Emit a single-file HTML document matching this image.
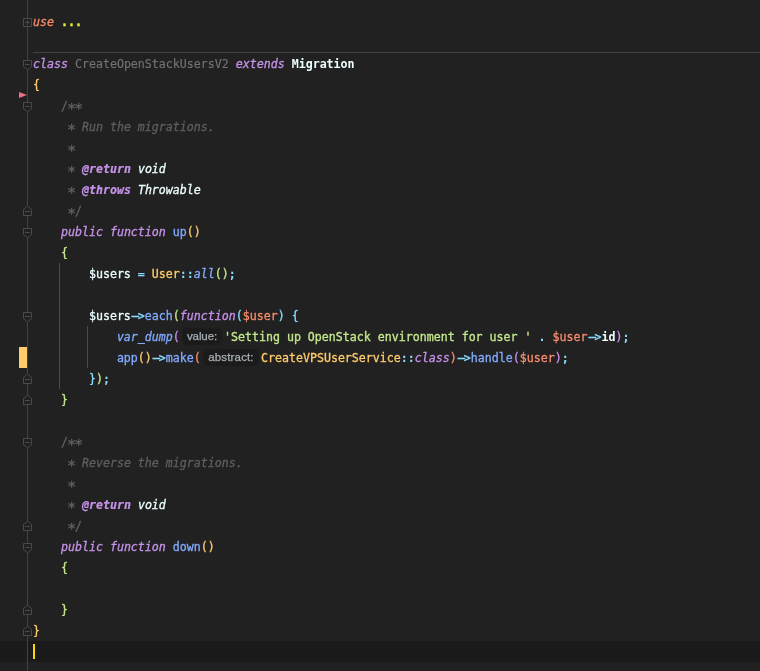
<!DOCTYPE html>
<html>
<head>
<meta charset="utf-8">
<title>CreateOpenStackUsersV2.php</title>
<style>
html,body{margin:0;padding:0;background:#212121;}
body{width:760px;height:671px;position:relative;overflow:hidden;font-family:"DejaVu Sans Mono","Liberation Mono",monospace;font-size:11.627px;color:#eeffff;}
.ln{position:absolute;left:33px;height:21px;line-height:21px;white-space:pre;margin-top:1px;will-change:transform;-webkit-text-stroke:0.3px currentColor;}
.cur{position:absolute;left:0;top:641px;width:760px;height:21px;background:#1a1a1a;}
.caret{position:absolute;left:33px;top:644px;width:2px;height:15px;background:#ffd600;}
.vline{position:absolute;left:27px;top:0;width:1px;height:671px;background:#424242;}
.sep{position:absolute;left:33px;top:52px;width:727px;height:1px;background:#424242;}
.g1{position:absolute;left:59px;top:263px;width:1px;height:126px;background:#475234;}
.g2{position:absolute;left:87px;top:326px;width:1px;height:42px;background:#37515c;}
.mod{position:absolute;left:19px;top:347px;width:8px;height:21px;background:#ffcb6b;}
.fold{position:absolute;left:22px;width:11px;height:12px;}
i{font-style:oblique;}
.k{color:#c792ea;font-style:oblique;}
.u{color:#f78c6c;font-style:oblique;}
.d{color:#ecec3a;font-weight:bold;}
.g{color:#737373;-webkit-text-stroke:0.15px currentColor;}
.w{color:#eeffff;}
.wb{color:#eeffff;font-weight:bold;-webkit-text-stroke:0;}
.y{color:#ffcb6b;}
.gr{color:#c3e88d;}
.c{color:#89ddff;}
.cb{color:#89ddff;font-weight:bold;-webkit-text-stroke:0;}
.b{color:#82aaff;}
.bi{color:#82aaff;font-style:oblique;}
.o{color:#f78c6c;}
.p{color:#c792ea;}
.cm{color:#5e5e5e;font-style:oblique;}
.cs{color:#606060;}
.hy{display:inline-block;font-weight:normal;transform-origin:40% 50%;transform:scaleX(2.4);}
.as{display:inline-block;font-weight:normal;transform:translateY(2.5px) scale(1.25);}
.t{color:#c792ea;font-style:oblique;font-weight:bold;-webkit-text-stroke:0.2px currentColor;}
.wi{color:#eeffff;font-style:oblique;}
.hint{will-change:transform;position:absolute;height:17px;line-height:17px;border-radius:5px;background:#1b1b1b;color:#a6afb4;font-family:"Liberation Sans",sans-serif;font-size:11.5px;-webkit-text-stroke:0.25px currentColor;text-align:center;white-space:pre;}
</style>
</head>
<body>
<div class="cur"></div>
<div class="vline"></div>
<div class="sep"></div>
<div class="g1"></div>
<div class="g2"></div>
<div class="mod"></div>
<svg style="position:absolute;left:18px;top:91px" width="10" height="8" viewBox="0 0 10 8"><path d="M1 1 L9 4 L1 7 Z" fill="#f07080"/></svg>

<svg class="fold" style="top:17px" width="11" height="12" viewBox="0 0 11 12"><path d="M1.5 1.5 H9.5 V9.5 H1.5 Z" fill="#212121" stroke="#4a4a4a"/><path d="M3 5.5 H8 M5.5 3 V8" stroke="#4a4a4a"/></svg>
<svg class="fold" style="top:59px" width="11" height="12" viewBox="0 0 11 12"><path d="M1.5 1.5 H9.5 V7.5 L5.5 11 L1.5 7.5 Z" fill="#212121" stroke="#4a4a4a"/><path d="M3 5.5 H8" stroke="#4a4a4a"/></svg>
<svg class="fold" style="top:101px" width="11" height="12" viewBox="0 0 11 12"><path d="M1.5 1.5 H9.5 V7.5 L5.5 11 L1.5 7.5 Z" fill="#212121" stroke="#4a4a4a"/><path d="M3 5.5 H8" stroke="#4a4a4a"/></svg>
<svg class="fold" style="top:227px" width="11" height="12" viewBox="0 0 11 12"><path d="M1.5 1.5 H9.5 V7.5 L5.5 11 L1.5 7.5 Z" fill="#212121" stroke="#4a4a4a"/><path d="M3 5.5 H8" stroke="#4a4a4a"/></svg>
<svg class="fold" style="top:311px" width="11" height="12" viewBox="0 0 11 12"><path d="M1.5 1.5 H9.5 V7.5 L5.5 11 L1.5 7.5 Z" fill="#212121" stroke="#4a4a4a"/><path d="M3 5.5 H8" stroke="#4a4a4a"/></svg>
<svg class="fold" style="top:437px" width="11" height="12" viewBox="0 0 11 12"><path d="M1.5 1.5 H9.5 V7.5 L5.5 11 L1.5 7.5 Z" fill="#212121" stroke="#4a4a4a"/><path d="M3 5.5 H8" stroke="#4a4a4a"/></svg>
<svg class="fold" style="top:542px" width="11" height="12" viewBox="0 0 11 12"><path d="M1.5 1.5 H9.5 V7.5 L5.5 11 L1.5 7.5 Z" fill="#212121" stroke="#4a4a4a"/><path d="M3 5.5 H8" stroke="#4a4a4a"/></svg>
<svg class="fold" style="top:205px" width="11" height="12" viewBox="0 0 11 12"><path d="M1.5 10.5 H9.5 V4.5 L5.5 1 L1.5 4.5 Z" fill="#212121" stroke="#4a4a4a"/><path d="M3 6.5 H8" stroke="#4a4a4a"/></svg>
<svg class="fold" style="top:373px" width="11" height="12" viewBox="0 0 11 12"><path d="M1.5 10.5 H9.5 V4.5 L5.5 1 L1.5 4.5 Z" fill="#212121" stroke="#4a4a4a"/><path d="M3 6.5 H8" stroke="#4a4a4a"/></svg>
<svg class="fold" style="top:394px" width="11" height="12" viewBox="0 0 11 12"><path d="M1.5 10.5 H9.5 V4.5 L5.5 1 L1.5 4.5 Z" fill="#212121" stroke="#4a4a4a"/><path d="M3 6.5 H8" stroke="#4a4a4a"/></svg>
<svg class="fold" style="top:520px" width="11" height="12" viewBox="0 0 11 12"><path d="M1.5 10.5 H9.5 V4.5 L5.5 1 L1.5 4.5 Z" fill="#212121" stroke="#4a4a4a"/><path d="M3 6.5 H8" stroke="#4a4a4a"/></svg>
<svg class="fold" style="top:604px" width="11" height="12" viewBox="0 0 11 12"><path d="M1.5 10.5 H9.5 V4.5 L5.5 1 L1.5 4.5 Z" fill="#212121" stroke="#4a4a4a"/><path d="M3 6.5 H8" stroke="#4a4a4a"/></svg>
<svg class="fold" style="top:625px" width="11" height="12" viewBox="0 0 11 12"><path d="M1.5 10.5 H9.5 V4.5 L5.5 1 L1.5 4.5 Z" fill="#212121" stroke="#4a4a4a"/><path d="M3 6.5 H8" stroke="#4a4a4a"/></svg>

<div class="ln" style="top:11px"><span class="u">use</span> <span class="d">...</span></div>
<div class="ln" style="top:53px"><span class="k">class</span> <span class="g">CreateOpenStackUsersV2</span> <span class="k">extends</span> <span class="wb">Migration</span></div>
<div class="ln" style="top:74px"><span class="y">{</span></div>
<div class="ln" style="top:95px">    <span class="cs">/<b class="as">*</b><b class="as">*</b></span></div>
<div class="ln" style="top:116px">     <span class="cs"><b class="as">*</b></span> <span class="cm">Run the migrations.</span></div>
<div class="ln" style="top:137px">     <span class="cs"><b class="as">*</b></span></div>
<div class="ln" style="top:158px">     <span class="cs"><b class="as">*</b></span> <span class="t">@return</span> <span class="wi">void</span></div>
<div class="ln" style="top:179px">     <span class="cs"><b class="as">*</b></span> <span class="t">@throws</span> <span class="wi">Throwable</span></div>
<div class="ln" style="top:200px">     <span class="cs"><b class="as">*</b>/</span></div>
<div class="ln" style="top:221px">    <span class="k">public</span> <span class="k">function</span> <span class="b">up</span><span class="y">()</span></div>
<div class="ln" style="top:242px">    <span class="gr">{</span></div>
<div class="ln" style="top:263px">        <span class="w">$users</span> <span class="c">=</span> <span class="y">User</span><span class="cb">::</span><span class="bi">all</span><span class="gr">()</span><span class="cb">;</span></div>
<div class="ln" style="top:305px">        <span class="w">$users</span><span class="c"><b class="hy">-</b>&gt;</span><span class="b">each</span><span class="gr">(</span><span class="k">function</span><span class="c">(</span><span class="o">$user</span><span class="c">)</span> <span class="c">{</span></div>
<div class="ln" style="top:326px">            <span class="bi">var_dump</span><span class="p">(</span></div>
<div class="hint" style="left:182px;top:328px;width:40px;letter-spacing:-0.1px">value:</div>
<div class="ln" style="top:326px;left:224px"><span class="gr">'Setting up OpenStack environment for user '</span> <span class="cb">.</span> <span class="o">$user</span><span class="c"><b class="hy">-</b>&gt;</span><span class="wb">id</span><span class="p">)</span><span class="cb">;</span></div>
<div class="ln" style="top:347px">            <span class="b">app</span><span class="y">()</span><span class="c"><b class="hy">-</b>&gt;</span><span class="b">make</span><span class="o">(</span></div>
<div class="hint" style="left:203px;top:349px;width:56px;letter-spacing:0.15px">abstract:</div>
<div class="ln" style="top:347px;left:261px"><span class="y">CreateVPSUserService</span><span class="cb">::</span><span class="k">class</span><span class="o">)</span><span class="c"><b class="hy">-</b>&gt;</span><span class="b">handle</span><span class="p">(</span><span class="o">$user</span><span class="p">)</span><span class="cb">;</span></div>
<div class="ln" style="top:368px">        <span class="c">}</span><span class="gr">)</span><span class="cb">;</span></div>
<div class="ln" style="top:389px">    <span class="gr">}</span></div>
<div class="ln" style="top:431px">    <span class="cs">/<b class="as">*</b><b class="as">*</b></span></div>
<div class="ln" style="top:452px">     <span class="cs"><b class="as">*</b></span> <span class="cm">Reverse the migrations.</span></div>
<div class="ln" style="top:473px">     <span class="cs"><b class="as">*</b></span></div>
<div class="ln" style="top:494px">     <span class="cs"><b class="as">*</b></span> <span class="t">@return</span> <span class="wi">void</span></div>
<div class="ln" style="top:515px">     <span class="cs"><b class="as">*</b>/</span></div>
<div class="ln" style="top:536px">    <span class="k">public</span> <span class="k">function</span> <span class="b">down</span><span class="y">()</span></div>
<div class="ln" style="top:557px">    <span class="gr">{</span></div>
<div class="ln" style="top:599px">    <span class="gr">}</span></div>
<div class="ln" style="top:620px"><span class="y">}</span></div>
<div class="caret"></div>
</body>
</html>
